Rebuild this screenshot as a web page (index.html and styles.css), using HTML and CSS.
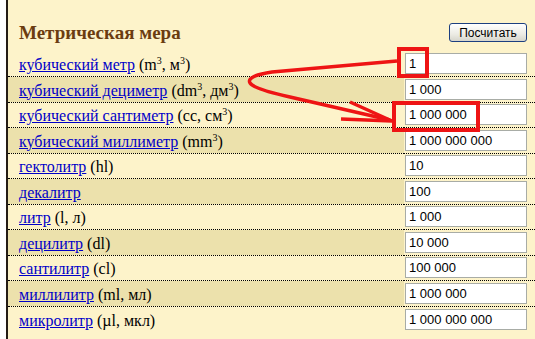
FILE: index.html
```html
<!DOCTYPE html>
<html lang="ru">
<head>
  <meta charset="UTF-8">
  <title>Метрическая мера</title>
  <link rel="stylesheet" href="styles.css">
</head>
<body>

<div class="panel">
  <div class="head">
    <h2>Метрическая мера</h2>
    <button class="calc">Посчитать</button>
  </div>

  <table class="units">
    <tr><td class="name"><a href="#">кубический метр</a> (m<sup>3</sup>, м<sup>3</sup>)</td><td class="val"><input type="text" value="1"></td></tr>
    <tr><td class="name"><a href="#">кубический дециметр</a> (dm<sup>3</sup>, дм<sup>3</sup>)</td><td class="val"><input type="text" value="1 000"></td></tr>
    <tr><td class="name"><a href="#">кубический сантиметр</a> (cc, см<sup>3</sup>)</td><td class="val"><input type="text" value="1 000 000"></td></tr>
    <tr><td class="name"><a href="#">кубический миллиметр</a> (mm<sup>3</sup>)</td><td class="val"><input type="text" value="1 000 000 000"></td></tr>
    <tr><td class="name"><a href="#">гектолитр</a> (hl)</td><td class="val"><input type="text" value="10"></td></tr>
    <tr><td class="name"><a href="#">декалитр</a></td><td class="val"><input type="text" value="100"></td></tr>
    <tr><td class="name"><a href="#">литр</a> (l, л)</td><td class="val"><input type="text" value="1 000"></td></tr>
    <tr><td class="name"><a href="#">децилитр</a> (dl)</td><td class="val"><input type="text" value="10 000"></td></tr>
    <tr><td class="name"><a href="#">сантилитр</a> (cl)</td><td class="val"><input type="text" value="100 000"></td></tr>
    <tr><td class="name"><a href="#">миллилитр</a> (ml, мл)</td><td class="val"><input type="text" value="1 000 000"></td></tr>
    <tr><td class="name"><a href="#">микролитр</a> (µl, мкл)</td><td class="val"><input type="text" value="1 000 000 000"></td></tr>
  </table>
</div>

<svg class="marks" width="535" height="339" viewBox="0 0 535 339">
  <g fill="none" stroke="#ee1414" stroke-width="4">
    <rect x="399" y="49" width="28" height="27"/>
    <rect x="394" y="103" width="84" height="27"/>
    <path d="M397,61 L272,72 Q246,76 250,83 Q254,89 290,97 L390,120" stroke-width="3.5"/>
    <path d="M350,102 L392,121 L341,119" stroke-width="3.5"/>
  </g>
</svg>

</body>
</html>
```

FILE: styles.css
```css
body { margin: 0; background: #fff; font-family: "Liberation Serif", "Times New Roman", serif; }
.panel {
  margin-left: 6px;
  border-left: 2px solid #241c14;
  background: #fdf3ca;
  min-height: 339px;
}
.head {
  display: flex;
  justify-content: space-between;
  align-items: flex-end;
  height: 51px;
  box-sizing: border-box;
  padding: 0 8px 8px 11px;
}
.head h2 {
  margin: 0 0 -1px;
  font: bold 19px "Liberation Serif", "Times New Roman", serif;
  color: #6b3c10;
}
.calc {
  width: 78px;
  height: 19px;
  margin-bottom: 1px;
  padding: 0;
  font: 12px "Liberation Sans", Arial, sans-serif;
  color: #000;
  border: 1px solid #1c3f80;
  border-radius: 3px;
  background: linear-gradient(#ffffff, #ecebe4 60%, #d6d5cc);
}
.units { width: 100%; border-collapse: collapse; }
.units td {
  height: 25.5px;
  padding: 0;
  border-bottom: 1px dotted #000;
  box-sizing: border-box;
}
.units tr:last-child td { border-bottom: none; }
.units .name {
  padding: 0 0 2px 11px;
  vertical-align: bottom;
  font: 16px "Liberation Serif", "Times New Roman", serif;
  color: #000;
}
.units tr:nth-child(even) .name { background: #ece1ac; }
.units a { color: #0000c8; }
.units sup { font-size: 10px; line-height: 0; }
.units .val { width: 123px; padding: 0 8px 0 1px; }
.units input {
  width: 122px;
  height: 21px;
  box-sizing: border-box;
  border: 1px solid #a8aca6;
  padding: 0 3px;
  font: 13px "Liberation Sans", Arial, sans-serif;
  color: #000;
  display: block;
}
.marks { position: absolute; top: 0; left: 0; }
```
